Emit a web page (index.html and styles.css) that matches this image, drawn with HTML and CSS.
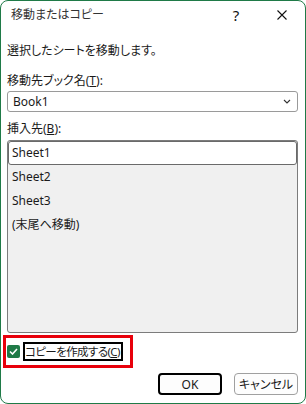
FILE: index.html
```html
<!DOCTYPE html>
<html lang="ja">
<head>
  <meta charset="UTF-8" />
  <title>移動またはコピー</title>
  <link rel="stylesheet" href="styles.css">
</head>
<body>
  <div class="window">
    <div class="titlebar">
      <span class="title">移動またはコピー</span>
      <span class="cap-btn help">?</span>
      <span class="cap-btn close">
        <svg width="10" height="10" viewBox="0 0 10 10"><path d="M0.5 0.5 L9.5 9.5 M9.5 0.5 L0.5 9.5" stroke="#111" stroke-width="1.1" fill="none"/></svg>
      </span>
    </div>

    <div class="body">
      <p class="msg">選択したシートを移動します。</p>

      <div class="label">移動先ブック名(<u>T</u>):</div>
      <div class="select">
        <span>Book1</span>
        <svg width="8" height="5" viewBox="0 0 8 5"><path d="M1 1 L4 4 L7 1" stroke="#333" stroke-width="1.1" fill="none"/></svg>
      </div>

      <div class="label label-list">挿入先(<u>B</u>):</div>
      <div class="list">
        <div class="item selected">Sheet1</div>
        <div class="item">Sheet2</div>
        <div class="item">Sheet3</div>
        <div class="item">(末尾へ移動)</div>
      </div>

      <div class="copy-row">
        <span class="check">
          <svg width="9" height="7" viewBox="0 0 9 7"><path d="M1 3.5 L3.5 6 L8 1" stroke="#fff" stroke-width="1.6" fill="none"/></svg>
        </span>
        <span class="copy-label">コピーを作成する(<u>C</u>)</span>
      </div>

      <div class="buttons">
        <button class="btn default">OK</button>
        <button class="btn">キャンセル</button>
      </div>
    </div>
  </div>
</body>
</html>
```

FILE: styles.css
```css
body { margin: 0; background: #fff; }
.window { width: 306px; height: 404px; box-sizing: border-box; border: 1px solid #1f7a47; border-radius: 8px; background: #fff; overflow: hidden; font-family: "Noto Sans", "Noto Sans CJK JP", sans-serif; font-size: 12px; color: #1a1a1a; font-feature-settings: "palt"; }
.titlebar { display: flex; align-items: center; height: 28px; padding-left: 10px; }
.title { flex: 1; line-height: 16px; color: #333; font-size: 12px; }
.cap-btn { width: 46px; height: 28px; display: flex; align-items: center; justify-content: center; }
.help { font-size: 15px; color: #111; }
.body { padding: 0 7px 0 6px; }
.msg { margin: 14px 0 0; line-height: 16px; }
.label { margin-top: 14px; line-height: 16px; }
.label-list { margin-top: 9px; }
.select { margin-top: 2px; height: 21px; box-sizing: border-box; border: 1px solid #9a9a9a; border-radius: 3px; display: flex; align-items: center; justify-content: space-between; padding: 0 6px 0 5px; }
.list { margin-top: 3px; height: 193px; box-sizing: border-box; border: 1px solid #7c7c7c; border-radius: 3px; background: #f0f0f0; }
.item { height: 24px; line-height: 24px; padding-left: 4px; }
.item.selected { background: #fff; border: 1px solid #6a6a6a; border-radius: 3px; line-height: 22px; box-sizing: border-box; padding-left: 3px; }
.copy-row { margin: 2px 0 0 -4px; width: 130px; height: 33px; box-sizing: border-box; border: 3px solid #e8000b; display: flex; align-items: center; padding-left: 1px; white-space: nowrap; }
.check { width: 13px; height: 13px; flex: none; background: #1f7a47; border-radius: 2px; display: flex; align-items: center; justify-content: center; }
.copy-label { margin-left: 3px; border: 2px solid #000; padding: 0 1px 0 0; line-height: 15px; font-size: 11.5px; letter-spacing: -0.6px; }
.buttons { display: flex; justify-content: flex-end; gap: 12px; margin-top: 5px; }
.btn { width: 64px; height: 22px; box-sizing: border-box; background: #fdfdfd; border: 1px solid #a0a0a0; border-radius: 4px; font-family: inherit; font-size: 12px; font-feature-settings: "palt"; color: #1a1a1a; padding: 0; }
.btn.default { border: 2px solid #000; }
```
